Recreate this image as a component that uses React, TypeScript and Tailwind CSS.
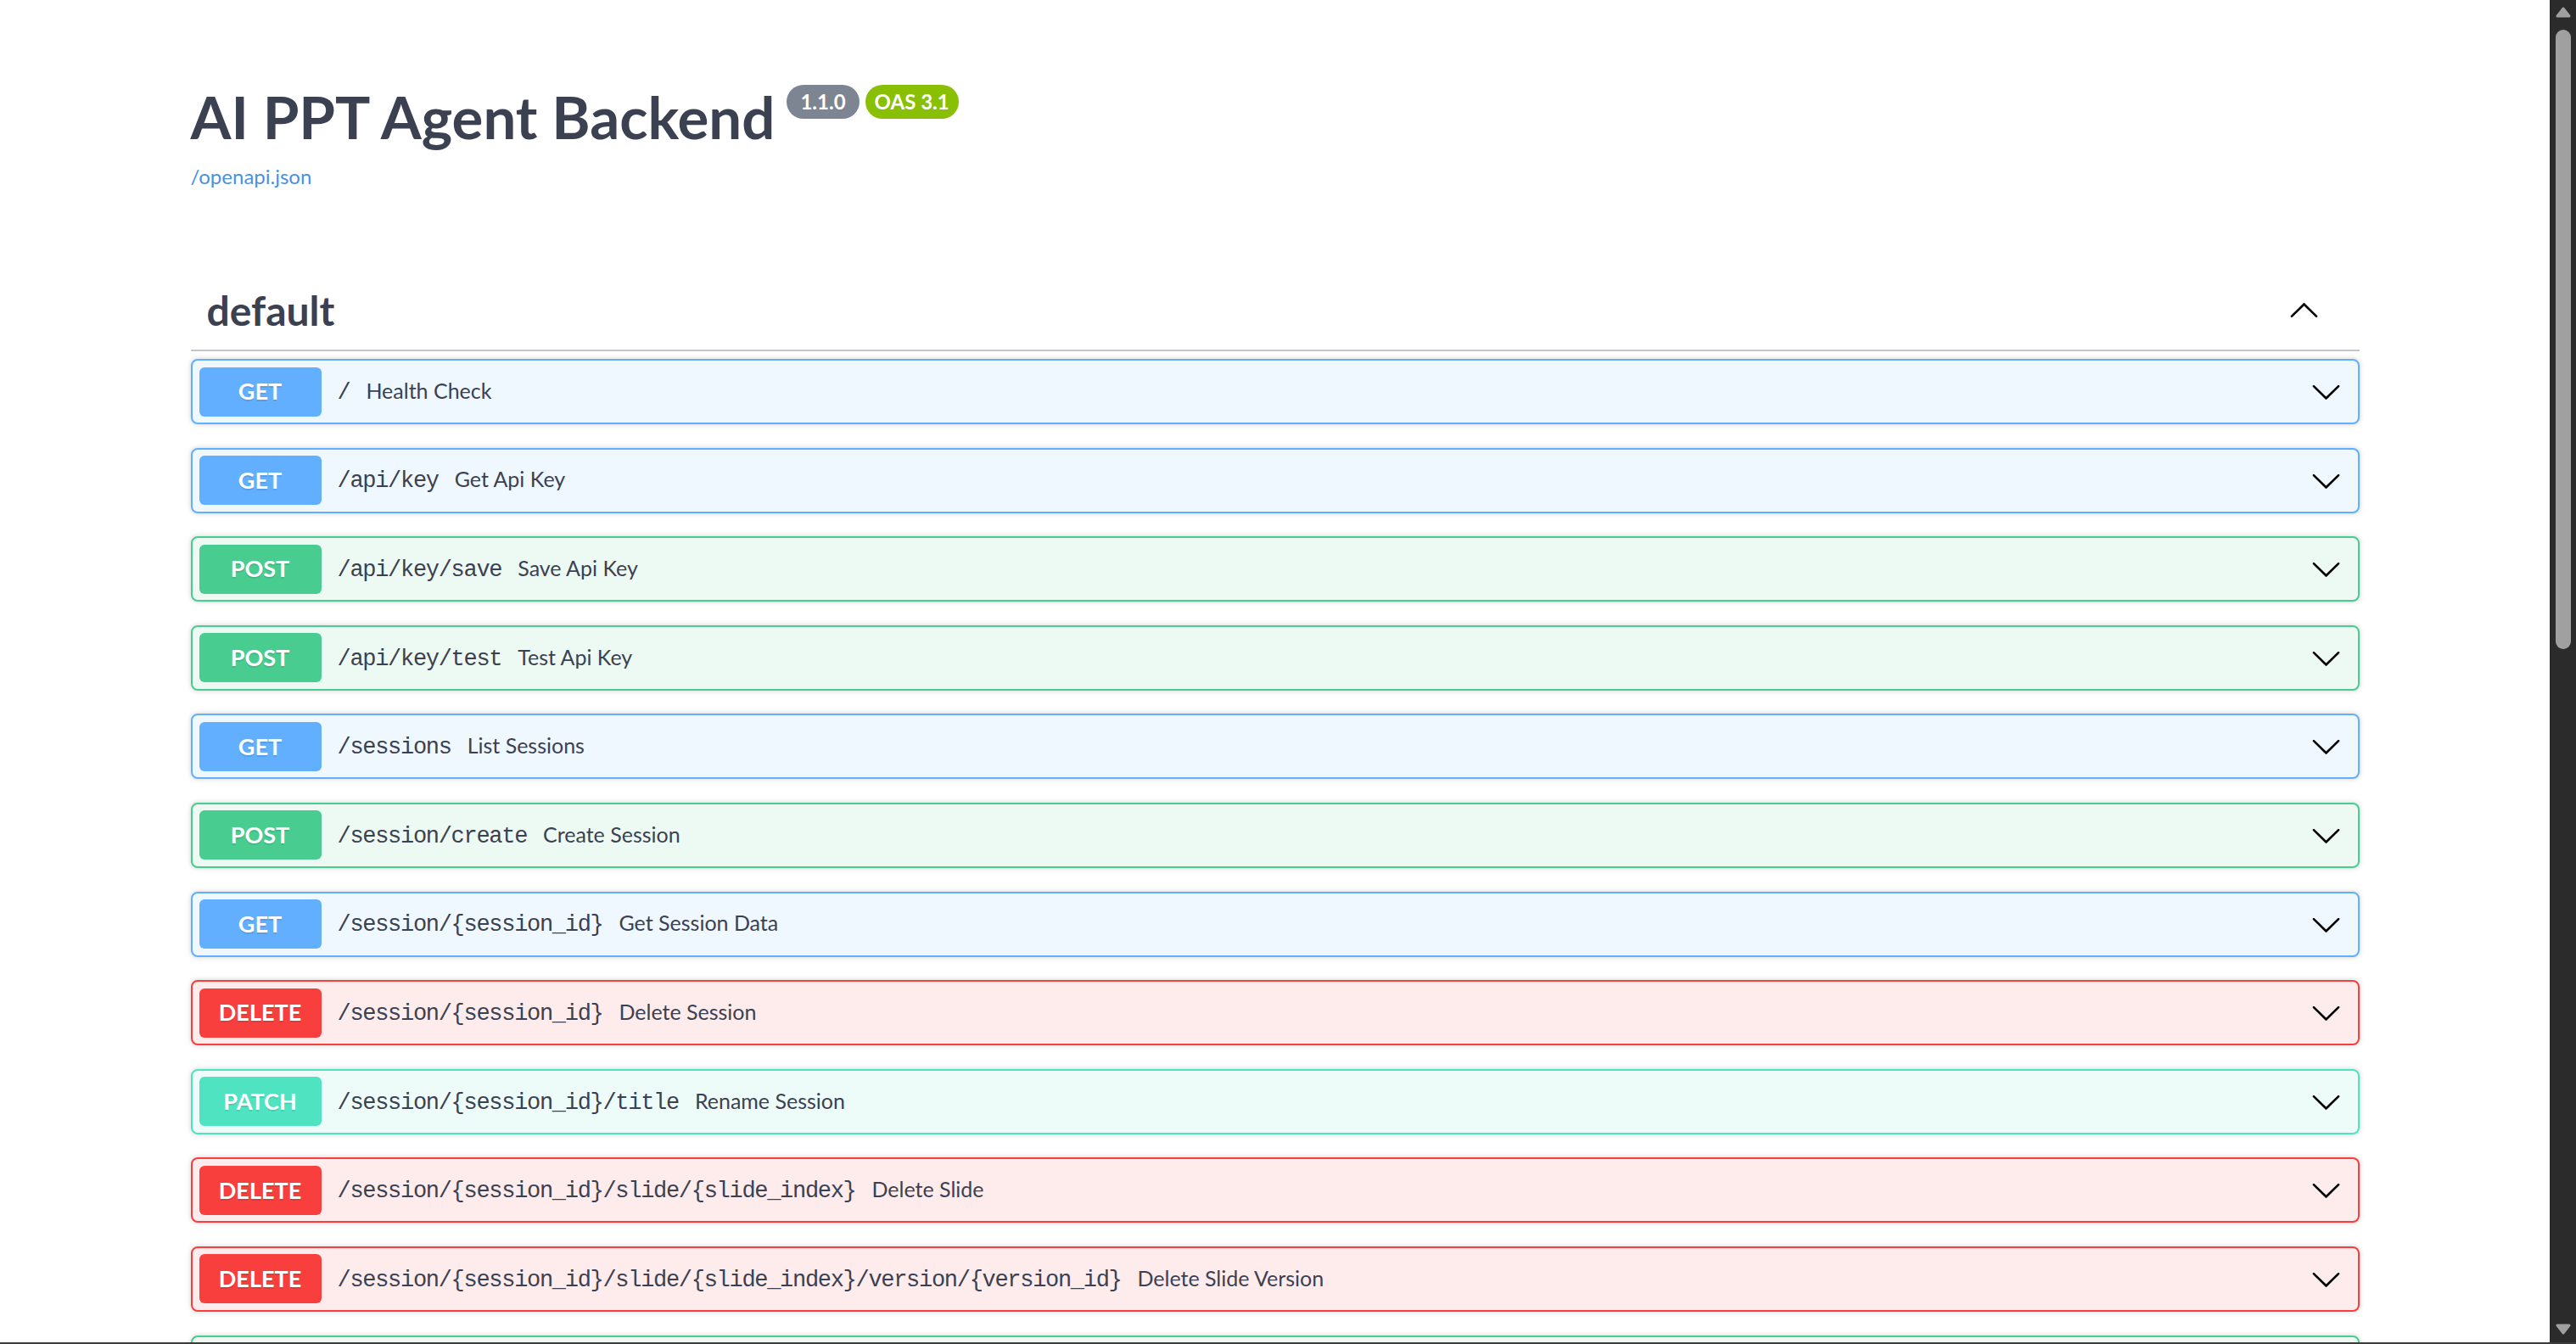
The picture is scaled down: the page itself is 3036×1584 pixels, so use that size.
import * as React from 'react';

type Method = 'GET' | 'POST' | 'DELETE' | 'PATCH';

const methodStyle: Record<Method, { row: string; badge: string }> = {
  GET: { row: 'border-[#61affe] bg-[#eff7ff]', badge: 'bg-[#61affe]' },
  POST: { row: 'border-[#49cc90] bg-[#edfaf4]', badge: 'bg-[#49cc90]' },
  DELETE: { row: 'border-[#f93e3e] bg-[#feebeb]', badge: 'bg-[#f93e3e]' },
  PATCH: { row: 'border-[#50e3c2] bg-[#edfcf9]', badge: 'bg-[#50e3c2]' },
};

const operations: { method: Method; path: string; summary: string }[] = [
  { method: 'GET', path: '/', summary: 'Health Check' },
  { method: 'GET', path: '/api/key', summary: 'Get Api Key' },
  { method: 'POST', path: '/api/key/save', summary: 'Save Api Key' },
  { method: 'POST', path: '/api/key/test', summary: 'Test Api Key' },
  { method: 'GET', path: '/sessions', summary: 'List Sessions' },
  { method: 'POST', path: '/session/create', summary: 'Create Session' },
  { method: 'GET', path: '/session/{session_id}', summary: 'Get Session Data' },
  { method: 'DELETE', path: '/session/{session_id}', summary: 'Delete Session' },
  { method: 'PATCH', path: '/session/{session_id}/title', summary: 'Rename Session' },
  { method: 'DELETE', path: '/session/{session_id}/slide/{slide_index}', summary: 'Delete Slide' },
  {
    method: 'DELETE',
    path: '/session/{session_id}/slide/{slide_index}/version/{version_id}',
    summary: 'Delete Slide Version',
  },
];

function Arrow({ up = false, className = '' }: { up?: boolean; className?: string }) {
  return (
    <svg
      viewBox="0 0 20 20"
      className={`h-[37px] w-[37px] shrink-0 ${up ? 'rotate-180' : ''} ${className}`}
      fill="#000"
    >
      <path d="M17.418 6.109c.272-.268.709-.268.979 0s.271.701 0 .969l-7.908 7.83c-.27.268-.707.268-.979 0l-7.908-7.83c-.27-.268-.27-.701 0-.969.271-.268.709-.268.979 0L10 13.25l7.418-7.141z" />
    </svg>
  );
}

function OpRow({ method, path, summary }: { method: Method; path: string; summary: string }) {
  const s = methodStyle[method];
  return (
    <div
      className={`flex h-[77px] shrink-0 items-center rounded-[8px] border-2 shadow-[0_0_6px_rgba(0,0,0,0.19)] ${s.row}`}
    >
      <span
        className={`ml-[8px] flex h-[58px] w-[144px] shrink-0 items-center justify-center rounded-[6px] text-[27px] font-bold text-white [text-shadow:0_2px_0_rgba(0,0,0,0.1)] ${s.badge}`}
      >
        {method}
      </span>
      <div className="flex items-baseline pt-[2px]">
        <span className="pl-[19px] font-['Liberation_Mono',monospace] text-[27px] tracking-[-1.3px] text-[#3b4151]">
          {path}
        </span>
        <span className="pl-[19px] text-[25px] text-[#3b4151]">{summary}</span>
      </div>
      <Arrow className="ml-auto mr-[19px]" />
    </div>
  );
}

function Scrollbar() {
  return (
    <div className="flex w-[31px] shrink-0 flex-col items-center bg-[#2b2b2b]">
      <svg viewBox="0 0 18 13" className="mt-[8px] h-[13px] w-[18px]">
        <polygon points="9,2 16,11 2,11" fill="#a0a0a0" stroke="#a0a0a0" strokeWidth="3" strokeLinejoin="round" />
      </svg>
      <div className="mt-[14px] h-[730px] w-[18px] rounded-full bg-[#a0a0a0]" />
      <div className="flex-1" />
      <svg viewBox="0 0 18 13" className="mb-[9px] h-[13px] w-[18px]">
        <polygon points="2,2 16,2 9,11" fill="#a0a0a0" stroke="#a0a0a0" strokeWidth="3" strokeLinejoin="round" />
      </svg>
    </div>
  );
}

export default function App() {
  return (
    <div className="flex h-[1584px] w-[3036px] flex-col overflow-hidden bg-white font-['Lato',sans-serif] text-[#3b4151]">
      <div className="flex min-h-0 flex-1">
        <main className="min-w-0 flex-1 overflow-hidden">
          <div className="mx-auto w-[2556px]">
            <section className="pt-[96px]">
              <div className="flex items-start">
                <h2 className="text-[69px] font-bold leading-[84px]">AI PPT Agent Backend</h2>
                <div className="ml-[14px] mt-[4px] flex gap-[7px]">
                  <span className="flex h-[40px] items-center rounded-full bg-[#7d8492] px-[16px] text-[24px] font-bold text-white">
                    1.1.0
                  </span>
                  <span className="flex h-[40px] items-center rounded-full bg-[#89bf04] px-[11px] text-[24px] font-bold text-white">
                    OAS 3.1
                  </span>
                </div>
              </div>
              <a className="mt-[13px] block text-[24px] leading-[30px] text-[#4990e2]">/openapi.json</a>
            </section>

            <section className="mt-[101px]">
              <div className="flex h-[90px] items-center border-b-2 border-[#c4c6cb] pb-[4px] pl-[19px]">
                <h3 className="text-[48px] font-bold">default</h3>
                <Arrow up className="ml-auto mr-[47px]" />
              </div>
              <div className="mt-[9px] flex flex-col gap-[27.6px]">
                {operations.map((op) => (
                  <OpRow key={op.method + op.path} {...op} />
                ))}
                <div className="h-[77px] shrink-0 rounded-[8px] border-2 border-[#49cc90] bg-[#edfaf4] shadow-[0_0_6px_rgba(0,0,0,0.19)]" />
              </div>
            </section>
          </div>
        </main>
        <Scrollbar />
      </div>
      <div className="h-[2px] shrink-0 bg-[#3c3c3c]" />
    </div>
  );
}
